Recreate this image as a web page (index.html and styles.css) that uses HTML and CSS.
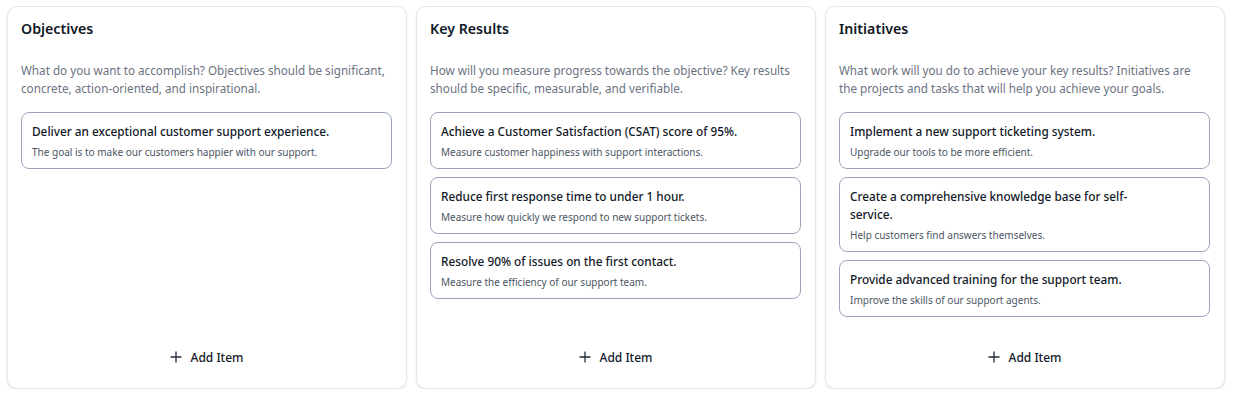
FILE: index.html
```html
<!DOCTYPE html>
<html lang="en">
<head>
<meta charset="utf-8">
<title>OKR Board</title>
<link rel="stylesheet" href="styles.css">
</head>
<body>
<div class="board">
  <section class="column">
    <h2 class="column-title">Objectives</h2>
    <p class="column-desc">What do you want to accomplish? Objectives should be significant, concrete, action-oriented, and inspirational.</p>
    <div class="items">
      <div class="item">
        <div class="item-title">Deliver an exceptional customer support experience.</div>
        <div class="item-sub">The goal is to make our customers happier with our support.</div>
      </div>
    </div>
    <button class="add-btn"><svg class="plus" viewBox="0 0 12 12" width="12" height="12"><path d="M6 0.5v11M0.5 6h11" stroke="currentColor" stroke-width="1.3" fill="none"/></svg><span>Add Item</span></button>
  </section>
  <section class="column">
    <h2 class="column-title">Key Results</h2>
    <p class="column-desc">How will you measure progress towards the objective? Key results should be specific, measurable, and verifiable.</p>
    <div class="items">
      <div class="item">
        <div class="item-title">Achieve a Customer Satisfaction (CSAT) score of 95%.</div>
        <div class="item-sub">Measure customer happiness with support interactions.</div>
      </div>
      <div class="item">
        <div class="item-title">Reduce first response time to under 1 hour.</div>
        <div class="item-sub">Measure how quickly we respond to new support tickets.</div>
      </div>
      <div class="item">
        <div class="item-title">Resolve 90% of issues on the first contact.</div>
        <div class="item-sub">Measure the efficiency of our support team.</div>
      </div>
    </div>
    <button class="add-btn"><svg class="plus" viewBox="0 0 12 12" width="12" height="12"><path d="M6 0.5v11M0.5 6h11" stroke="currentColor" stroke-width="1.3" fill="none"/></svg><span>Add Item</span></button>
  </section>
  <section class="column">
    <h2 class="column-title">Initiatives</h2>
    <p class="column-desc">What work will you do to achieve your key results? Initiatives are the projects and tasks that will help you achieve your goals.</p>
    <div class="items">
      <div class="item">
        <div class="item-title">Implement a new support ticketing system.</div>
        <div class="item-sub">Upgrade our tools to be more efficient.</div>
      </div>
      <div class="item">
        <div class="item-title">Create a comprehensive knowledge base for self-service.</div>
        <div class="item-sub">Help customers find answers themselves.</div>
      </div>
      <div class="item">
        <div class="item-title">Provide advanced training for the support team.</div>
        <div class="item-sub">Improve the skills of our support agents.</div>
      </div>
    </div>
    <button class="add-btn"><svg class="plus" viewBox="0 0 12 12" width="12" height="12"><path d="M6 0.5v11M0.5 6h11" stroke="currentColor" stroke-width="1.3" fill="none"/></svg><span>Add Item</span></button>
  </section>
</div>
</body>
</html>
```
FILE: styles.css
```css
* { box-sizing: border-box; }
html, body { margin: 0; background: #ffffff; }
body {
  font-family: "Noto Sans", "Open Sans", "Liberation Sans", sans-serif;
  color: #111827;
}
.board {
  display: grid;
  grid-template-columns: repeat(3, 400px);
  gap: 9px;
  padding: 6px 0 0 7px;
}
.column {
  height: 383px;
  border: 1px solid #e5e7eb;
  border-radius: 10px;
  box-shadow: 0 1px 3px rgba(0, 0, 0, 0.08), 0 1px 2px rgba(0, 0, 0, 0.04);
  padding: 12px 14px 13px 13px;
  display: flex;
  flex-direction: column;
  background: #fff;
}
.column-title {
  margin: 0;
  font-size: 14.2px;
  line-height: 20px;
  font-weight: 600;
  color: #111827;
}
.column-desc {
  margin: 23px 0 0;
  font-size: 11.7px;
  line-height: 17.5px;
  color: #6b7280;
}
.items {
  margin-top: 15px;
  display: flex;
  flex-direction: column;
  gap: 8px;
}
.item {
  border: 1px solid #9aa5bd;
  border-radius: 8px;
  padding: 9px 56px 8px 10px;
  background: #fff;
}
.item-title {
  font-size: 11.8px;
  line-height: 18px;
  font-weight: 500;
  color: #111827;
}
.item-sub {
  margin-top: 4px;
  font-size: 10px;
  line-height: 16px;
  color: #4b5563;
}
.add-btn {
  margin-top: auto;
  align-self: center;
  height: 36px;
  display: flex;
  align-items: center;
  gap: 9px;
  border: none;
  background: transparent;
  font-family: inherit;
  font-size: 12px;
  font-weight: 500;
  color: #111827;
  padding: 0 12px;
}
.plus { color: #1f2937; }
```
